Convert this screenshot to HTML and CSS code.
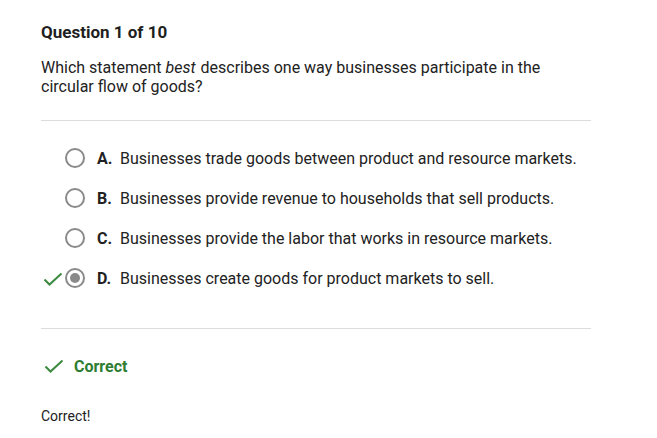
FILE: index.html
```html
<!DOCTYPE html>
<html>
<head>
<meta charset="utf-8">
<link rel="stylesheet" href="styles.css">
</head>
<body>
<div class="quiz">
  <h1 class="title">Question 1 of 10</h1>
  <p class="question">Which statement <em>best</em> describes one way businesses participate in the circular flow of goods?</p>
  <hr class="sep">
  <div class="options">
    <div class="option">
      <span class="mark"></span>
      <span class="radio"></span>
      <span class="letter">A.</span>
      <span class="text">Businesses trade goods between product and resource markets.</span>
    </div>
    <div class="option">
      <span class="mark"></span>
      <span class="radio"></span>
      <span class="letter">B.</span>
      <span class="text">Businesses provide revenue to households that sell products.</span>
    </div>
    <div class="option">
      <span class="mark"></span>
      <span class="radio"></span>
      <span class="letter">C.</span>
      <span class="text">Businesses provide the labor that works in resource markets.</span>
    </div>
    <div class="option">
      <span class="mark"><svg width="20" height="14" viewBox="0 0 20 14"><path d="M1.5 7.5 L6.5 12.5 L18.5 1.5" fill="none" stroke="#3b8a3f" stroke-width="2"/></svg></span>
      <span class="radio selected"><span class="dot"></span></span>
      <span class="letter">D.</span>
      <span class="text">Businesses create goods for product markets to sell.</span>
    </div>
  </div>
  <hr class="sep sep2">
  <div class="result">
    <svg class="result-icon" width="20" height="14" viewBox="0 0 20 14"><path d="M1.5 7.5 L6.5 12.5 L18.5 1.5" fill="none" stroke="#3b8a3f" stroke-width="2"/></svg>
    <span class="result-text">Correct</span>
  </div>
  <p class="feedback">Correct!</p>
</div>
</body>
</html>
```
FILE: styles.css
```css
html, body {
  margin: 0;
  padding: 0;
  background: #ffffff;
}
body {
  font-family: Roboto, "Liberation Sans", Arial, sans-serif;
  color: #222222;
}
.quiz {
  width: 550px;
  padding: 22px 0 0 41px;
}
.title {
  margin: 0;
  font-size: 17px;
  line-height: 20px;
  font-weight: 700;
  color: #1f1f1f;
}
.question {
  margin: 16px 0 0 0;
  font-size: 16px;
  line-height: 19px;
  width: 520px;
}
.question em {
  font-style: italic;
  margin-right: 1px;
}
.sep {
  margin: 24px 0 0 0;
  border: 0;
  height: 1px;
  background: #dcdcdc;
}
.options {
  display: flex;
  flex-direction: column;
  padding-top: 17px;
}
.option {
  display: flex;
  align-items: center;
  height: 40px;
  font-size: 16px;
}
.mark {
  width: 24px;
  display: flex;
  align-items: center;
  padding-top: 2px;
}
.mark svg {
  margin-left: 2px;
}
.radio {
  box-sizing: border-box;
  width: 20px;
  height: 20px;
  border: 2px solid #8a8a8a;
  border-radius: 50%;
  display: flex;
  align-items: center;
  justify-content: center;
  flex: none;
}
.dot {
  width: 10px;
  height: 10px;
  border-radius: 50%;
  background: #8a8a8a;
}
.letter {
  font-weight: 700;
  margin-left: 12px;
  width: 23px;
}
.text {
  color: #222222;
}
.sep2 {
  margin-top: 30px;
}
.result {
  display: flex;
  align-items: center;
  height: 24px;
  margin-top: 25px;
}
.result-icon {
  margin-left: 3px;
  margin-right: 10px;
}
.result-text {
  font-size: 16px;
  font-weight: 700;
  color: #2e7d32;
}
.feedback {
  margin: 29px 0 0 0;
  font-size: 14px;
  line-height: 18px;
}
```
